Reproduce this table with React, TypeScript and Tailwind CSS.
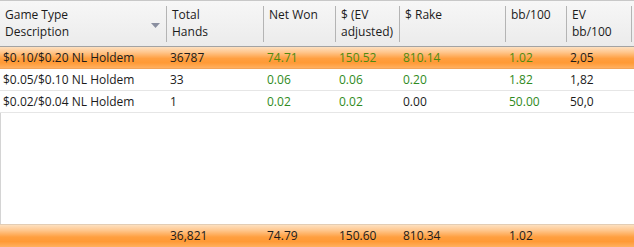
const columns = [
  { label: ['Game Type', 'Description'], sort: true },
  { label: ['Total', 'Hands'] },
  { label: ['Net Won'] },
  { label: ['$ (EV', 'adjusted)'] },
  { label: ['$ Rake'] },
  { label: ['bb/100'] },
  { label: ['EV', 'bb/100'] },
]

const grid = 'grid grid-cols-[167px_97px_72px_64px_106px_61px_65px_2px]'

type Cell = { text: string; green?: boolean }

const rows: Cell[][] = [
  [
    { text: '$0.10/$0.20 NL Holdem' },
    { text: '36787' },
    { text: '74.71', green: true },
    { text: '150.52', green: true },
    { text: '810.14', green: true },
    { text: '1.02', green: true },
    { text: '2,05' },
  ],
  [
    { text: '$0.05/$0.10 NL Holdem' },
    { text: '33' },
    { text: '0.06', green: true },
    { text: '0.06', green: true },
    { text: '0.20', green: true },
    { text: '1.82', green: true },
    { text: '1,82' },
  ],
  [
    { text: '$0.02/$0.04 NL Holdem' },
    { text: '1' },
    { text: '0.02', green: true },
    { text: '0.02', green: true },
    { text: '0.00' },
    { text: '50.00', green: true },
    { text: '50,0' },
  ],
]

const totals = ['', '36,821', '74.79', '150.60', '810.34', '1.02', '']

const orange =
  'bg-[linear-gradient(to_bottom,#fde0c0_0%,#ffc68c_25%,#ff9f40_55%,#ff9a36_75%,#ffb060_100%)]'

export default function App() {
  return (
    <div
      className="flex h-[247px] w-[634px] flex-col overflow-hidden bg-white text-[12px] text-[#1b1b1b]"
      style={{ fontFamily: '"Open Sans", "Noto Sans", sans-serif' }}
    >
      <div
        className={`${grid} h-[47px] border-y border-b-[#a3a3a3] border-t-[#c8c8c8] bg-[linear-gradient(to_bottom,#f7f7f7,#ebebeb)]`}
      >
        {columns.map((col, i) => (
          <div key={i} className="relative flex items-start pb-[4px] pt-[5px]">
            <div className="flex h-full w-full items-start justify-between border-r border-[#b4b4b4] pl-[5px] pr-[6px] leading-[17px]">
              <div className="flex flex-col">
                {col.label.map(line => (
                  <span key={line}>{line}</span>
                ))}
              </div>
              {col.sort && (
                <svg width="9" height="5" viewBox="0 0 9 5" className="mt-[17px]">
                  <path d="M0 0h9L4.5 5z" fill="#8a8fa0" />
                </svg>
              )}
            </div>
          </div>
        ))}
        <div />
      </div>

      {rows.map((row, r) => (
        <div
          key={r}
          className={`${grid} h-[22px] items-center border-b ${
            r === 0 ? `${orange} border-[#f2a45a]` : 'border-[#e6e6e6]'
          }`}
        >
          {row.map((cell, c) => (
            <span
              key={c}
              className={`whitespace-nowrap pl-[3px] ${
                cell.green ? (r === 0 ? 'text-[#4f8a10]' : 'text-[#2f8a22]') : ''
              }`}
            >
              {cell.text}
            </span>
          ))}
          <span />
        </div>
      ))}

      <div className="flex-1 border-l border-[#d4d4d4]" />

      <div className={`${grid} h-[23px] items-center border-t border-[#e3cdb4] ${orange}`}>
        {totals.map((t, i) => (
          <span key={i} className="whitespace-nowrap pl-[3px] text-[#1b1b1b]">
            {t}
          </span>
        ))}
        <span />
      </div>
    </div>
  )
}
